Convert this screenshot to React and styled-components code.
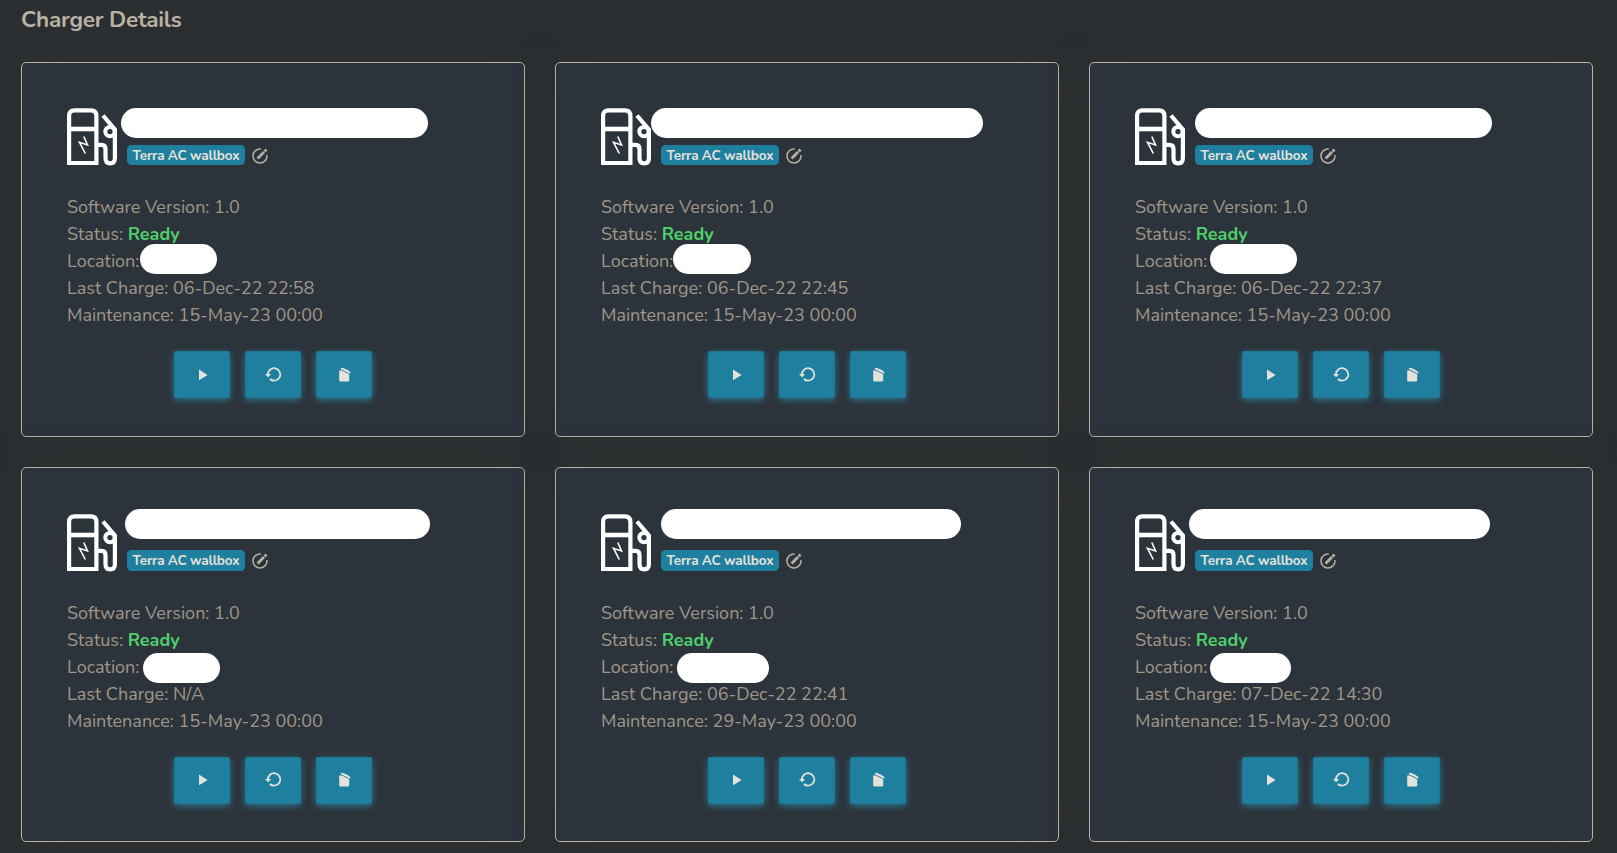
import React from 'react';
import styled, { createGlobalStyle } from 'styled-components';

const GlobalStyle = createGlobalStyle`
  * { box-sizing: border-box; }
  body {
    margin: 0;
    background: #2b2f31;
    color: #a0978a;
    font-family: Nunito, Lato, sans-serif;
    overflow: hidden;
  }
`;

const Page = styled.main`
  height: 853px;
  padding: 3.8px 24px 0 21px;
  overflow: hidden;
`;

const Title = styled.h1`
  margin: 0 0 26px;
  height: 32px;
  color: #bcb3a6;
  font-size: 22.5px;
  line-height: 32px;
  font-weight: 700;
  letter-spacing: -0.25px;
`;

const Grid = styled.div`
  display: grid;
  grid-template-columns: repeat(3, 504px);
  grid-auto-rows: 375px;
  gap: 30.5px 30px;
`;

const Card = styled.section`
  display: flex;
  flex-direction: column;
  padding: 45px;
  border: 1px solid #b8b0a3;
  border-radius: 5px;
  background: #2c333b;
  box-shadow: 0 0 35px rgba(49, 50, 51, 0.9);
`;

const Header = styled.header`
  display: flex;
  height: 57.6px;
`;

const PumpSvg = styled.svg`
  flex: none;
  width: 50px;
  height: 58px;
  margin-top: 0.4px;
`;

const HeaderText = styled.div`
  display: flex;
  flex-direction: column;
  justify-content: flex-end;
  flex: 1;
  padding-left: 10px;
`;

const Mask = styled.span`
  display: block;
  flex: none;
  height: 30px;
  border-radius: 15px;
  background: #fff;
  width: ${(p) => p.$width}px;
  margin-left: ${(p) => p.$shift}px;
`;

const NameMask = styled(Mask)`
  margin-bottom: ${(p) => p.$gap}px;
`;

const ModelRow = styled.div`
  display: flex;
  align-items: center;
  height: 20.5px;
  gap: 7px;
`;

const Badge = styled.span`
  width: 118px;
  height: 20.5px;
  border-radius: 4.5px;
  background: #1f7f9e;
  color: #e5e2dc;
  font-size: 13.5px;
  line-height: 21px;
  font-weight: 700;
  letter-spacing: -0.16px;
  text-align: center;
  white-space: nowrap;
`;

const EditSvg = styled.svg`
  width: 16px;
  height: 16px;
  margin-top: 1.4px;
`;

const Details = styled.div`
  margin-top: 28.8px;
  font-size: 18px;
  line-height: 27px;
`;

const Line = styled.div`
  display: flex;
  height: 27px;
  white-space: pre;
`;

const Label = styled.span`
  width: 73px;
`;

const Status = styled.strong`
  color: #4fcf6b;
  font-weight: 700;
`;

const LocationMask = styled(Mask)`
  margin-top: ${(p) => p.$top}px;
`;

const Actions = styled.div`
  display: flex;
  justify-content: center;
  gap: 15px;
  margin-top: 22px;
`;

const ActionButton = styled.button`
  display: flex;
  align-items: center;
  justify-content: center;
  width: 56px;
  height: 47px;
  padding: 0;
  border: 1px solid #1e7793;
  border-radius: 2px;
  background: #1f7f9e;
  color: #e5e2dc;
  box-shadow: 0 2px 7px rgba(45, 140, 170, 0.75);
`;

const ActionSvg = styled.svg`
  width: 18px;
  height: 18px;
`;

function PumpIcon() {
  return (
    <PumpSvg viewBox="0 0 50 58" fill="none" stroke="#fff">
      <path d="M2.1 55V8Q2.1 2.300 7.500 2.300H24Q29.400 2.300 29.400 8V55Z" strokeWidth="4.200" />
      <path d="M2 21H29.500" strokeWidth="4.600" />
      <path d="M31 36.800H34.500Q38.500 36.800 38.500 41V50Q38.500 55.300 43.200 55.300Q47.900 55.300 47.900 50V21.500L36 7.500" strokeWidth="4.200" />
      <circle cx="43" cy="23.600" r="4.700" strokeWidth="4" />
      <path d="M16.800 28.500L20.500 37L12.500 34.300L18.300 45.500" strokeWidth="1.600" />
    </PumpSvg>
  );
}

function EditIcon() {
  return (
    <EditSvg viewBox="0 0 16 16" fill="none" stroke="#b8b0a3" strokeWidth="1.500">
      <path d="M8.800 1A7 7 0 1 0 14.900 7" />
      <path d="M5.600 10.400L12 4" strokeWidth="2.800" />
      <path d="M12.600 3.400L14.500 1.500" strokeWidth="2.800" />
    </EditSvg>
  );
}

const PlayIcon = () => (
  <ActionSvg viewBox="0 0 18 18" fill="currentColor">
    <path d="M6 3.500L14.600 8.900L6 14.300Z" />
  </ActionSvg>
);

const RestartIcon = () => (
  <ActionSvg viewBox="0 0 18 18" fill="none" stroke="currentColor" strokeWidth="1.700">
    <path d="M3.900 8.800A6.200 6.200 0 1 1 5.900 13" />
    <path d="M0.900 7.900H7.200L4.100 11.200Z" fill="currentColor" stroke="none" />
  </ActionSvg>
);

const TrashIcon = () => (
  <ActionSvg viewBox="0 0 18 18" fill="currentColor">
    <path d="M4.200 4.600H6.800L14.200 8.300V14.200Q14.200 15.600 12.800 15.600H5.600Q4.200 15.600 4.200 14.200Z" />
    <path d="M6.300 1.700L8.300 1.900L10.900 3.200L12 3.500L15.600 6.300L15 7.700L5.600 3Z" />
  </ActionSvg>
);

const chargers = [
  { id: 1, lastCharge: '06-Dec-22 22:58', maintenance: '15-May-23 00:00', name: [-5.8, 307], place: [-0.2, 77.2], gap: 7.1, top: -4.2 },
  { id: 2, lastCharge: '06-Dec-22 22:45', maintenance: '15-May-23 00:00', name: [-10, 332], place: [-1.5, 78.2], gap: 7.1, top: -4.2 },
  { id: 3, lastCharge: '06-Dec-22 22:37', maintenance: '15-May-23 00:00', name: [0, 297], place: [1.6, 87], gap: 7.1, top: -4.2 },
  { id: 4, lastCharge: 'N/A', maintenance: '15-May-23 00:00', name: [-2, 305.4], place: [3, 77.4], gap: 11.2, top: -0.7 },
  { id: 5, lastCharge: '06-Dec-22 22:41', maintenance: '29-May-23 00:00', name: [0, 300.4], place: [3, 92.4], gap: 11.2, top: -0.7 },
  { id: 6, lastCharge: '07-Dec-22 14:30', maintenance: '15-May-23 00:00', name: [-6, 301.4], place: [1.6, 81.2], gap: 11.2, top: -0.7 },
];

function ChargerCard({ charger }) {
  return (
    <Card>
      <Header>
        <PumpIcon />
        <HeaderText>
          <NameMask $shift={charger.name[0]} $width={charger.name[1]} $gap={charger.gap} />
          <ModelRow>
            <Badge>Terra AC wallbox</Badge>
            <EditIcon />
          </ModelRow>
        </HeaderText>
      </Header>
      <Details>
        <Line>Software Version: 1.0</Line>
        <Line>Status: <Status>Ready</Status></Line>
        <Line>
          <Label>Location:</Label>
          <LocationMask $shift={charger.place[0]} $width={charger.place[1]} $top={charger.top} />
        </Line>
        <Line>Last Charge: {charger.lastCharge}</Line>
        <Line>Maintenance: {charger.maintenance}</Line>
      </Details>
      <Actions>
        <ActionButton aria-label="Start"><PlayIcon /></ActionButton>
        <ActionButton aria-label="Restart"><RestartIcon /></ActionButton>
        <ActionButton aria-label="Delete"><TrashIcon /></ActionButton>
      </Actions>
    </Card>
  );
}

export default function App() {
  return (
    <>
      <GlobalStyle />
      <Page>
        <Title>Charger Details</Title>
        <Grid>
          {chargers.map((charger) => (
            <ChargerCard key={charger.id} charger={charger} />
          ))}
        </Grid>
      </Page>
    </>
  );
}
